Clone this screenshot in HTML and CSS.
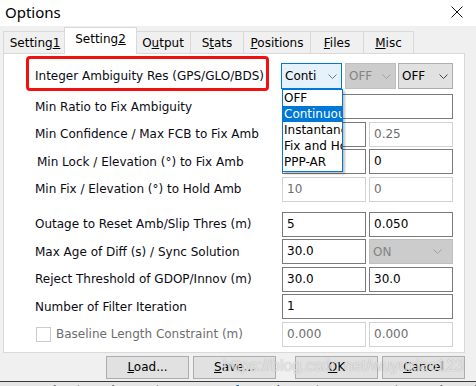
FILE: index.html
```html
<!DOCTYPE html>
<html lang="en">
<head>
    <meta charset="utf-8">
    <title>Options</title>
    <link rel="stylesheet" href="styles.css">
</head>
<body>
    <div class="window">
        <div class="titlebar">
            <span class="title">Options</span>
            <svg class="close" width="12" height="12" viewBox="0 0 12 12"><path d="M0.5 0.5L11.5 11.5M11.5 0.5L0.5 11.5"/></svg>
        </div>
        <div class="dialog">
            <div class="tabs">
                <div class="tab t1">Setting<u>1</u></div>
                <div class="tab t2 active">Setting<u>2</u></div>
                <div class="tab t3">O<u>u</u>tput</div>
                <div class="tab t4">S<u>t</u>ats</div>
                <div class="tab t5"><u>P</u>ositions</div>
                <div class="tab t6"><u>F</u>iles</div>
                <div class="tab t7"><u>M</u>isc</div>
            </div>
            <div class="panel">
                <div class="row first">
                    <span class="label marked">Integer Ambiguity Res (GPS/GLO/BDS)</span>
                    <div class="combos">
                        <div class="combo focus c1">Conti
                            <svg class="chev" width="9" height="5" viewBox="0 0 9 5"><polyline points="0.5,0.5 4.5,4.5 8.5,0.5"/></svg>
                            <ul class="droplist">
                                <li>OFF</li>
                                <li class="sel">Continuous</li>
                                <li>Instantaneous</li>
                                <li>Fix and Hold</li>
                                <li>PPP-AR</li>
                            </ul>
                        </div>
                        <div class="combo disabled c2">OFF
                            <svg class="chev" width="9" height="5" viewBox="0 0 9 5"><polyline points="0.5,0.5 4.5,4.5 8.5,0.5"/></svg>
                        </div>
                        <div class="combo c3">OFF
                            <svg class="chev" width="9" height="5" viewBox="0 0 9 5"><polyline points="0.5,0.5 4.5,4.5 8.5,0.5"/></svg>
                        </div>
                    </div>
                </div>
                <div class="row second">
                    <span class="label">Min Ratio to Fix Ambiguity</span>
                    <div class="field wide"></div>
                </div>
                <div class="row">
                    <span class="label">Min Confidence / Max FCB to Fix Amb</span>
                    <div class="field"></div>
                    <div class="field disabled">0.25</div>
                </div>
                <div class="row">
                    <span class="label indent">Min Lock / Elevation (°) to Fix Amb</span>
                    <div class="field"></div>
                    <div class="field">0</div>
                </div>
                <div class="row">
                    <span class="label">Min Fix / Elevation (°) to Hold Amb</span>
                    <div class="field disabled">10</div>
                    <div class="field disabled">0</div>
                </div>
                <div class="row group">
                    <span class="label">Outage to Reset Amb/Slip Thres (m)</span>
                    <div class="field">5</div>
                    <div class="field">0.050</div>
                </div>
                <div class="row">
                    <span class="label">Max Age of Diff (s) / Sync Solution</span>
                    <div class="field">30.0</div>
                    <div class="combo disabled flat">ON
                        <svg class="chev" width="9" height="5" viewBox="0 0 9 5"><polyline points="0.5,0.5 4.5,4.5 8.5,0.5"/></svg>
                    </div>
                </div>
                <div class="row">
                    <span class="label">Reject Threshold of GDOP/Innov (m)</span>
                    <div class="field">30.0</div>
                    <div class="field">30.0</div>
                </div>
                <div class="row">
                    <span class="label">Number of Filter Iteration</span>
                    <div class="field wide">1</div>
                </div>
                <div class="row">
                    <span class="label check"><span class="box"></span>Baseline Length Constraint (m)</span>
                    <div class="field disabled">0.000</div>
                    <div class="field disabled">0.000</div>
                </div>
            </div>
            <div class="buttons">
                <div class="button"><u>L</u>oad...</div>
                <div class="button"><u>S</u>ave...</div>
                <div class="button ok"><u>O</u>K</div>
                <div class="button"><u>C</u>ancel</div>
            </div>
            <div class="watermark">https://blog.csdn.net/wuyuxiao123</div>
        </div>
        <div class="taskbar">
            <span>Search</span>
            <span>View</span>
            <span>To KML</span>
            <span class="cur">Options</span>
            <span>Execute</span>
            <span>Exit</span>
        </div>
    </div>
</body>
</html>
```

FILE: styles.css
```css
body {
    margin: 0;
    background: #f0f0f0;
    font-family: "DejaVu Sans", sans-serif;
    font-size: 12px;
    color: #000;
}

.window {
    width: 476px;
    height: 386px;
    overflow: hidden;
    position: relative;
}

.titlebar {
    height: 26px;
    background: #fff;
    display: flex;
    align-items: center;
    justify-content: space-between;
    padding: 0 13px 0 5px;
}

.title {
    font-family: "Noto Sans", sans-serif;
    font-size: 15px;
    margin-top: -3px;
}

.close {
    stroke: #111;
    stroke-width: 1;
    fill: none;
    margin-top: -3px;
}

.dialog {
    position: relative;
    background: #f0f0f0;
}

/* tab strip */
.tabs {
    display: flex;
    align-items: flex-end;
    height: 27px;
    padding-left: 3px;
}

.tab {
    height: 22px;
    line-height: 22px;
    text-align: center;
    border: 1px solid #d9d9d9;
    border-bottom: none;
    margin-left: -1px;
    box-sizing: border-box;
    color: #000;
    white-space: nowrap;
}

.tab:first-child {
    margin-left: 0;
}

.tab.active {
    background: #fff;
    height: 27px;
    line-height: 22px;
    margin: 0 -2px -1px -3px;
    position: relative;
    z-index: 1;
    padding-bottom: 1px;
}

.tab.active + .tab {
    margin-left: 0;
}

.t1 { width: 64px; }
.t2 { width: 73px; }
.t3 { width: 56px; }
.t4 { width: 54px; }
.t5 { width: 68px; }
.t6 { width: 54px; }
.t7 { width: 51px; }

/* page */
.panel {
    position: relative;
    margin: 0 11px 0 3px;
    height: 300px;
    box-sizing: border-box;
    background: #fff;
    border: 1px solid #d9d9d9;
    padding: 9px 11px 0 31px;
}

.row {
    display: grid;
    grid-template-columns: 1fr 84px 84px;
    column-gap: 3px;
    align-items: center;
    height: 25px;
    margin-top: 2.5px;
}

.row.first {
    height: 26px;
    margin-top: 0;
    grid-template-columns: 1fr auto;
}

.row.second {
    margin-top: 5px;
}

.row.group {
    margin-top: 10px;
}

.label {
    white-space: nowrap;
    color: #0a0a14;
}

.label.indent {
    padding-left: 2px;
}

.label.marked {
    position: relative;
}

.label.marked::after {
    content: "";
    position: absolute;
    left: -9px;
    right: 9px;
    top: -13px;
    bottom: -8px;
    border: 3px solid #f31010;
    border-radius: 4px;
}

.label.check {
    color: #6d6d6d;
    display: flex;
    align-items: center;
    margin-left: 1px;
}

.box {
    width: 13px;
    height: 13px;
    border: 1px solid #cccccc;
    margin-right: 5px;
}

.field {
    height: 25px;
    box-sizing: border-box;
    border: 1px solid #7a7a7a;
    background: #fff;
    padding-left: 4px;
    line-height: 23px;
}

.field.wide {
    grid-column: 2 / 4;
}

.field.disabled {
    border-color: #d2d2d2;
    color: #6d6d6d;
}

/* combo boxes */
.combos {
    display: flex;
    gap: 3px;
}

.combo {
    position: relative;
    height: 26px;
    box-sizing: border-box;
    border: 1px solid #adadad;
    background: #e1e1e1;
    padding: 0 4px 0 3px;
    line-height: 24px;
    display: flex;
    align-items: center;
    justify-content: space-between;
}

.chev {
    fill: none;
    stroke: #444;
    stroke-width: 1;
    flex-shrink: 0;
}

.combo.c1 { width: 61px; }
.combo.c2 { width: 51px; }
.combo.c3 { width: 55px; margin-left: -1px; }

.combo.focus {
    background: #e5f1fb;
    border-color: #0078d7;
}

.combo.focus .chev {
    stroke: #7a7a7a;
}

.combo.disabled {
    background: #cccccc;
    border-color: #bfbfbf;
    color: #838383;
}

.combo.disabled .chev {
    stroke: #a0a0a0;
}

.combo.flat {
    height: 25px;
    padding-right: 10px;
}

.droplist {
    position: absolute;
    top: 25px;
    left: 0;
    width: 61px;
    box-sizing: border-box;
    margin: 0;
    padding: 0 0 1px;
    list-style: none;
    background: #fff;
    border: 1px solid #0078d7;
    box-shadow: 2px 2px 2px rgba(0, 0, 0, 0.25);
    color: #000;
    z-index: 2;
}

.droplist li {
    height: 16px;
    line-height: 16px;
    padding-left: 1px;
    white-space: nowrap;
    overflow: hidden;
}

.droplist li.sel {
    background: #0078d7;
    color: #fff;
}

/* buttons */
.buttons {
    display: flex;
    justify-content: flex-end;
    gap: 4px;
    padding: 3px 11px 0 0;
}

.button {
    width: 83px;
    height: 23px;
    box-sizing: border-box;
    border: 1px solid #adadad;
    background: #e1e1e1;
    text-align: center;
    line-height: 21px;
}

.button.ok {
    margin-left: 15px;
}

.watermark {
    position: absolute;
    left: 223px;
    top: 331px;
    font-family: "Liberation Sans", sans-serif;
    font-size: 16px;
    color: rgba(255, 255, 255, 0.7);
    text-shadow: 0 0 1px rgba(80, 80, 80, 0.5);
    pointer-events: none;
}

.taskbar {
    position: absolute;
    left: 0;
    right: 0;
    top: 381px;
    height: 5px;
    border-top: 1px solid #3a3a3a;
    background: #e6e6e6;
    display: flex;
    overflow: hidden;
}

.taskbar span {
    width: 88px;
    text-align: center;
    line-height: 12px;
    margin-top: 3px;
    border-right: 1px solid #888;
    font-size: 13px;
    color: #333;
}

.taskbar span.cur {
    border-left: 2px solid #0078d7;
}
```
